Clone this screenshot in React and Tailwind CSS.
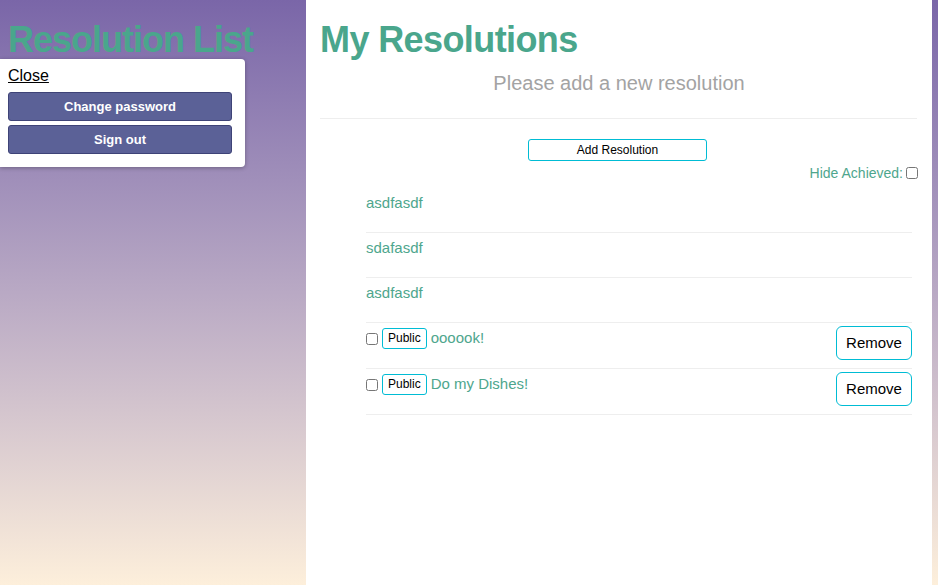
import React, { useState } from "react";

const resolutions = [
  { id: 1, text: "asdfasdf", owner: false },
  { id: 2, text: "sdafasdf", owner: false },
  { id: 3, text: "asdfasdf", owner: false },
  { id: 4, text: "oooook!", owner: true },
  { id: 5, text: "Do my Dishes!", owner: true },
];

function ResolutionRow({ item }) {
  return (
    <li
      className={
        item.owner
          ? "h-[46px] border-b border-[#eeeeee] flex items-start justify-between pt-[3px]"
          : "h-[45px] border-b border-[#eeeeee] flex items-start justify-between pt-[3px]"
      }
    >
      <div className="flex items-center">
        {item.owner && (
          <>
            <input type="checkbox" className="w-[12px] h-[12px] mr-[4px] mt-[1px]" />
            <span className="h-[21px] px-[5px] border border-[#00bcd4] rounded-[3px] text-[12px] text-black flex items-center mr-[4px]">
              Public
            </span>
          </>
        )}
        <span className="text-[15px] leading-[24px] text-[#4ea68d]">{item.text}</span>
      </div>
      {item.owner && (
        <button className="w-[76px] h-[34px] border border-[#00bcd4] rounded-[6px] text-[15px] text-black bg-white">
          Remove
        </button>
      )}
    </li>
  );
}

export default function App() {
  const [menuOpen, setMenuOpen] = useState(true);

  return (
    <div
      className="relative h-[585px] w-[938px] flex overflow-hidden bg-gradient-to-b from-[#7a66a8] via-[#b9a9c4] to-[#fdefdb]"
      style={{ fontFamily: '"Liberation Sans", Arial, sans-serif' }}
    >
      {/* left side */}
      <div className="w-[306px] shrink-0">
        <h1 className="pl-[8px] pt-[18px] text-[36px] leading-[44px] font-bold tracking-[-1px] text-[#4aa68c]">
          Resolution List
        </h1>
      </div>

      {menuOpen && (
        <div className="absolute left-0 top-[59px] w-[245px] h-[108px] bg-white rounded-r-[4px] shadow-[0_1px_4px_rgba(0,0,0,0.3)] px-[8px] pt-[7px]">
          <a
            href="#"
            onClick={(e) => {
              e.preventDefault();
              setMenuOpen(false);
            }}
            className="block text-[16px] leading-[20px] text-black underline"
          >
            Close
          </a>
          <button className="mt-[6px] w-[224px] h-[29px] bg-[#5b6197] border border-[#3e4377] rounded-[3px] text-white text-[13px] font-bold">
            Change password
          </button>
          <button className="mt-[4px] w-[224px] h-[29px] bg-[#5b6197] border border-[#3e4377] rounded-[3px] text-white text-[13px] font-bold">
            Sign out
          </button>
        </div>
      )}

      {/* main panel */}
      <div className="w-[626px] shrink-0 bg-white px-[14px]">
        <h1 className="pt-[18px] text-[36px] leading-[44px] font-bold tracking-[-0.6px] text-[#4aa68c]">
          My Resolutions
        </h1>
        <p className="mt-[9px] text-center text-[20px] leading-[24px] text-[#a3a3a3]">
          Please add a new resolution
        </p>
        <hr className="mt-[23px] border-0 border-t border-[#eeeeee] mr-[1px]" />

        <div className="flex justify-center mt-[20px] pr-[3px]">
          <button className="w-[179px] h-[22px] border border-[#00bcd4] rounded-[3px] text-[12px] text-black bg-white">
            Add Resolution
          </button>
        </div>
        <div className="flex justify-end items-center mt-[3px]">
          <label className="text-[14px] leading-[18px] text-[#4ea68d] mr-[3px]">Hide Achieved:</label>
          <input type="checkbox" className="w-[12px] h-[12px]" />
        </div>

        <ul className="ml-[46px] mr-[6px] mt-[6px]">
          {resolutions.map((r) => (
            <ResolutionRow key={r.id} item={r} />
          ))}
        </ul>
      </div>
    </div>
  );
}
